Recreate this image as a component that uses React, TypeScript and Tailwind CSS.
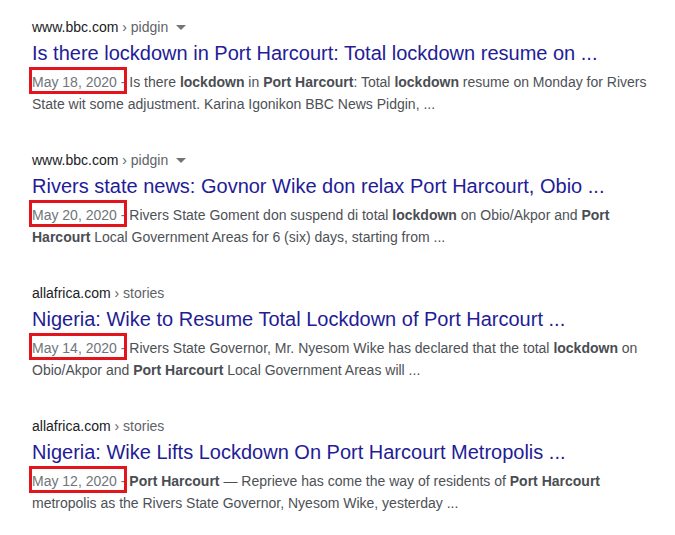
import React from "react";

type Part = { t: string; b?: boolean };
type Result = {
  site: string;
  path: string;
  arrow: boolean;
  title: string;
  date: string;
  lines: Part[][];
};

const results: Result[] = [
  {
    site: "www.bbc.com",
    path: "pidgin",
    arrow: true,
    title: "Is there lockdown in Port Harcourt: Total lockdown resume on ...",
    date: "May 18, 2020",
    lines: [
      [
        { t: "Is there " },
        { t: "lockdown", b: true },
        { t: " in " },
        { t: "Port Harcourt", b: true },
        { t: ": Total " },
        { t: "lockdown", b: true },
        { t: " resume on Monday for Rivers" },
      ],
      [{ t: "State wit some adjustment. Karina Igonikon BBC News Pidgin, ..." }],
    ],
  },
  {
    site: "www.bbc.com",
    path: "pidgin",
    arrow: true,
    title: "Rivers state news: Govnor Wike don relax Port Harcourt, Obio ...",
    date: "May 20, 2020",
    lines: [
      [
        { t: "Rivers State Goment don suspend di total " },
        { t: "lockdown", b: true },
        { t: " on Obio/Akpor and " },
        { t: "Port", b: true },
      ],
      [
        { t: "Harcourt", b: true },
        { t: " Local Government Areas for 6 (six) days, starting from ..." },
      ],
    ],
  },
  {
    site: "allafrica.com",
    path: "stories",
    arrow: false,
    title: "Nigeria: Wike to Resume Total Lockdown of Port Harcourt ...",
    date: "May 14, 2020",
    lines: [
      [
        { t: "Rivers State Governor, Mr. Nyesom Wike has declared that the total " },
        { t: "lockdown", b: true },
        { t: " on" },
      ],
      [
        { t: "Obio/Akpor and " },
        { t: "Port Harcourt", b: true },
        { t: " Local Government Areas will ..." },
      ],
    ],
  },
  {
    site: "allafrica.com",
    path: "stories",
    arrow: false,
    title: "Nigeria: Wike Lifts Lockdown On Port Harcourt Metropolis ...",
    date: "May 12, 2020",
    lines: [
      [
        { t: "Port Harcourt", b: true },
        { t: " \u2014 Reprieve has come the way of residents of " },
        { t: "Port Harcourt", b: true },
      ],
      [{ t: "metropolis as the Rivers State Governor, Nyesom Wike, yesterday ..." }],
    ],
  },
];

function ResultBlock({ r }: { r: Result }) {
  return (
    <div className="mb-[35px]">
      <div className="flex items-center text-[14px] leading-[20px]">
        <span className="text-[#202124]">{r.site}</span>
        <span className="text-[#5f6368]">&nbsp;› {r.path}</span>
        {r.arrow && (
          <svg width="10" height="6" viewBox="0 0 10 6" className="ml-[8px] mt-[1px]">
            <path d="M0 0 L10 0 L5 5 Z" fill="#70757a" />
          </svg>
        )}
      </div>
      <div className="mt-[3px] text-[20px] leading-[26px] text-[#231c96]">{r.title}</div>
      <div className="mt-[5px] text-[14px] leading-[22px] text-[#4d5156]">
        {r.lines.map((line, i) => (
          <div key={i} className="whitespace-nowrap">
            {i === 0 && (
              <span className="relative text-[#70757a]">
                {r.date} -
                <span className="absolute -left-[3px] -top-[7px] -bottom-[4px] -right-[2px] border-[3px] border-[#e3141c]" />
              </span>
            )}
            {i === 0 && " "}
            {line.map((p, j) =>
              p.b ? (
                <b key={j} className="font-bold text-[#4a4d52]">
                  {p.t}
                </b>
              ) : (
                <span key={j}>{p.t}</span>
              )
            )}
          </div>
        ))}
      </div>
    </div>
  );
}

export default function App() {
  return (
    <div
      className="w-[675px] h-[535px] bg-white overflow-hidden pl-[32px] pt-[17px]"
      style={{ fontFamily: '"Liberation Sans", Arial, sans-serif' }}
    >
      {results.map((r, i) => (
        <ResultBlock key={i} r={r} />
      ))}
    </div>
  );
}
